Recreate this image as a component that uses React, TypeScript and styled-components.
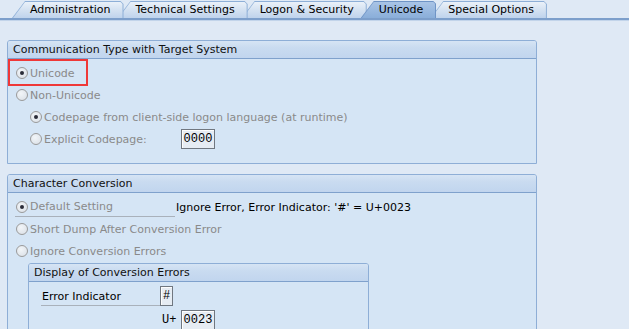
import React from "react";
import styled, { createGlobalStyle } from "styled-components";

const GlobalStyle = createGlobalStyle`
  html, body {
    margin: 0;
    padding: 0;
    background: #dfe9f5;
  }
  body {
    width: 629px;
    height: 329px;
    overflow: hidden;
    font-family: "DejaVu Sans", Tahoma, sans-serif;
    font-size: 11px;
    color: #000;
  }
`;

const TabBar = styled.div`
  display: flex;
  align-items: flex-end;
  height: 20px;
  padding: 1px 0 0 12px;
  box-sizing: border-box;
  border-bottom: 2px solid #7d9fcb;
  box-shadow: 0 1px 0 #c2d4ea;
`;

const Tab = styled.div<{ $active?: boolean; $z: number }>`
  position: relative;
  z-index: ${(p) => (p.$active ? 20 : p.$z)};
  height: 17px;
  margin-left: -6px;
  padding: 0 13px 0 18px;
  display: flex;
  align-items: center;
  white-space: nowrap;

  &:first-child {
    margin-left: 0;
  }

  &::before {
    content: "";
    position: absolute;
    inset: 0;
    background: ${(p) => (p.$active ? "#6f94c6" : "#8eafd7")};
    clip-path: polygon(0 100%, 13px 0, calc(100% - 3px) 0, 100% 3px, 100% 100%);
  }

  &::after {
    content: "";
    position: absolute;
    inset: 1px 1px 0 1px;
    background: ${(p) =>
      p.$active
        ? "linear-gradient(#a9c4e6, #8aaed9)"
        : "linear-gradient(#eaf1f9, #d6e3f2 45%, #bfd3ec)"};
    clip-path: polygon(0 100%, 12px 0, calc(100% - 2px) 0, 100% 2px, 100% 100%);
  }
`;

const TabLabel = styled.span`
  position: relative;
  z-index: 1;
`;

const Content = styled.div`
  padding: 20px 0 0 7px;
  display: flex;
  flex-direction: column;
  gap: 10px;
`;

const Panel = styled.section<{ $width: number }>`
  width: ${(p) => p.$width}px;
  box-sizing: border-box;
  border: 1px solid #8eaed6;
  border-radius: 3px 3px 0 0;
  background: #d5e5f5;
`;

const PanelHeader = styled.div`
  height: 17px;
  line-height: 17px;
  padding-left: 5px;
  border-bottom: 1px solid #7fa1cc;
  border-radius: 2px 2px 0 0;
  background: linear-gradient(#d6e4f4, #c9dbf0 40%, #c1d5ee);
  color: #111;
  white-space: nowrap;
`;

const PanelBody = styled.div<{ $pad: string }>`
  position: relative;
  padding: ${(p) => p.$pad};
`;

const Highlight = styled.div`
  position: absolute;
  left: 0;
  top: 0;
  width: 80px;
  height: 27px;
  box-sizing: border-box;
  border: 2px solid #ef3838;
  pointer-events: none;
`;

const OptionRow = styled.div<{ $indent?: number }>`
  display: flex;
  align-items: center;
  height: 22px;
  padding-left: ${(p) => p.$indent ?? 0}px;
  color: #8a8a8a;
  white-space: nowrap;
`;

const Radio = styled.span<{ $checked?: boolean }>`
  position: relative;
  flex: none;
  width: 12px;
  height: 12px;
  box-sizing: border-box;
  margin-right: 2px;
  border: 1px solid #9a9a9a;
  border-radius: 50%;
  background: radial-gradient(circle at 40% 35%, #f2f5f8, #d8dee5);

  &::after {
    content: "";
    display: ${(p) => (p.$checked ? "block" : "none")};
    position: absolute;
    left: 3px;
    top: 3px;
    width: 4px;
    height: 4px;
    border-radius: 50%;
    background: #2a2c38;
  }
`;

const LabelCell = styled.span<{ $width: number }>`
  display: inline-flex;
  align-items: center;
  width: ${(p) => p.$width}px;
`;

const UnderlinedCell = styled.div<{ $width: number; $color?: string; $offset?: number }>`
  display: flex;
  align-items: center;
  width: ${(p) => p.$width}px;
  height: 19px;
  box-sizing: border-box;
  margin-left: ${(p) => -(p.$offset ?? 0)}px;
  padding-left: ${(p) => p.$offset ?? 0}px;
  border-bottom: 1px solid #a9b1bb;
  color: ${(p) => p.$color ?? "inherit"};
  white-space: nowrap;
`;

const InfoText = styled.span`
  margin-left: 1px;
  color: #000;
`;

const CodeBox = styled.span<{ $width: number }>`
  display: inline-flex;
  align-items: center;
  justify-content: center;
  width: ${(p) => p.$width}px;
  height: 20px;
  box-sizing: border-box;
  border: 1px solid #707780;
  box-shadow: inset 1px 1px 0 #fdfdfd;
  background: #e6ecf3;
  color: #000;
  font-family: "Liberation Mono", "DejaVu Sans Mono", monospace;
  font-size: 12px;
`;

const SubPanelWrap = styled.div`
  margin: 1px 0 0 12px;
`;

const FieldRow = styled.div<{ $indent?: number }>`
  display: flex;
  align-items: flex-end;
  padding-left: ${(p) => p.$indent ?? 0}px;
  margin-bottom: 4px;
`;

const UnitText = styled.span`
  padding-left: 2px;
  font-family: "Liberation Mono", "DejaVu Sans Mono", monospace;
  font-size: 12px;
`;

const App = () => {
  const tabs = [
    "Administration",
    "Technical Settings",
    "Logon & Security",
    "Unicode",
    "Special Options",
  ];

  return (
    <>
      <GlobalStyle />
      <TabBar>
        {tabs.map((t, i) => (
          <Tab key={t} $active={t === "Unicode"} $z={tabs.length - i}>
            <TabLabel>{t}</TabLabel>
          </Tab>
        ))}
      </TabBar>

      <Content>
        <Panel $width={530}>
          <PanelHeader>Communication Type with Target System</PanelHeader>
          <PanelBody $pad="3px 0 13px 8px">
            <Highlight />
            <OptionRow>
              <Radio $checked />
              Unicode
            </OptionRow>
            <OptionRow>
              <Radio />
              Non-Unicode
            </OptionRow>
            <OptionRow $indent={14}>
              <Radio $checked />
              Codepage from client-side logon language (at runtime)
            </OptionRow>
            <OptionRow $indent={14}>
              <Radio />
              <LabelCell $width={137}>Explicit Codepage:</LabelCell>
              <CodeBox $width={34}>0000</CodeBox>
            </OptionRow>
          </PanelBody>
        </Panel>

        <Panel $width={530}>
          <PanelHeader>Character Conversion</PanelHeader>
          <PanelBody $pad="3px 0 20px 8px">
            <OptionRow>
              <UnderlinedCell $width={160} $offset={1}>
                <Radio $checked />
                Default Setting
              </UnderlinedCell>
              <InfoText>Ignore Error, Error Indicator: '#' = U+0023</InfoText>
            </OptionRow>
            <OptionRow>
              <Radio />
              Short Dump After Conversion Error
            </OptionRow>
            <OptionRow>
              <Radio />
              Ignore Conversion Errors
            </OptionRow>

            <SubPanelWrap>
              <Panel $width={341}>
                <PanelHeader>Display of Conversion Errors</PanelHeader>
                <PanelBody $pad="4px 0 10px 12px">
                  <FieldRow>
                    <UnderlinedCell $width={119} $color="#000" style={{ paddingLeft: 1 }}>
                      Error Indicator
                    </UnderlinedCell>
                    <CodeBox $width={13}>#</CodeBox>
                  </FieldRow>
                  <FieldRow $indent={119}>
                    <UnderlinedCell $width={21} $color="#000">
                      <UnitText>U+</UnitText>
                    </UnderlinedCell>
                    <CodeBox $width={34}>0023</CodeBox>
                  </FieldRow>
                </PanelBody>
              </Panel>
            </SubPanelWrap>
          </PanelBody>
        </Panel>
      </Content>
    </>
  );
};

export default App;
